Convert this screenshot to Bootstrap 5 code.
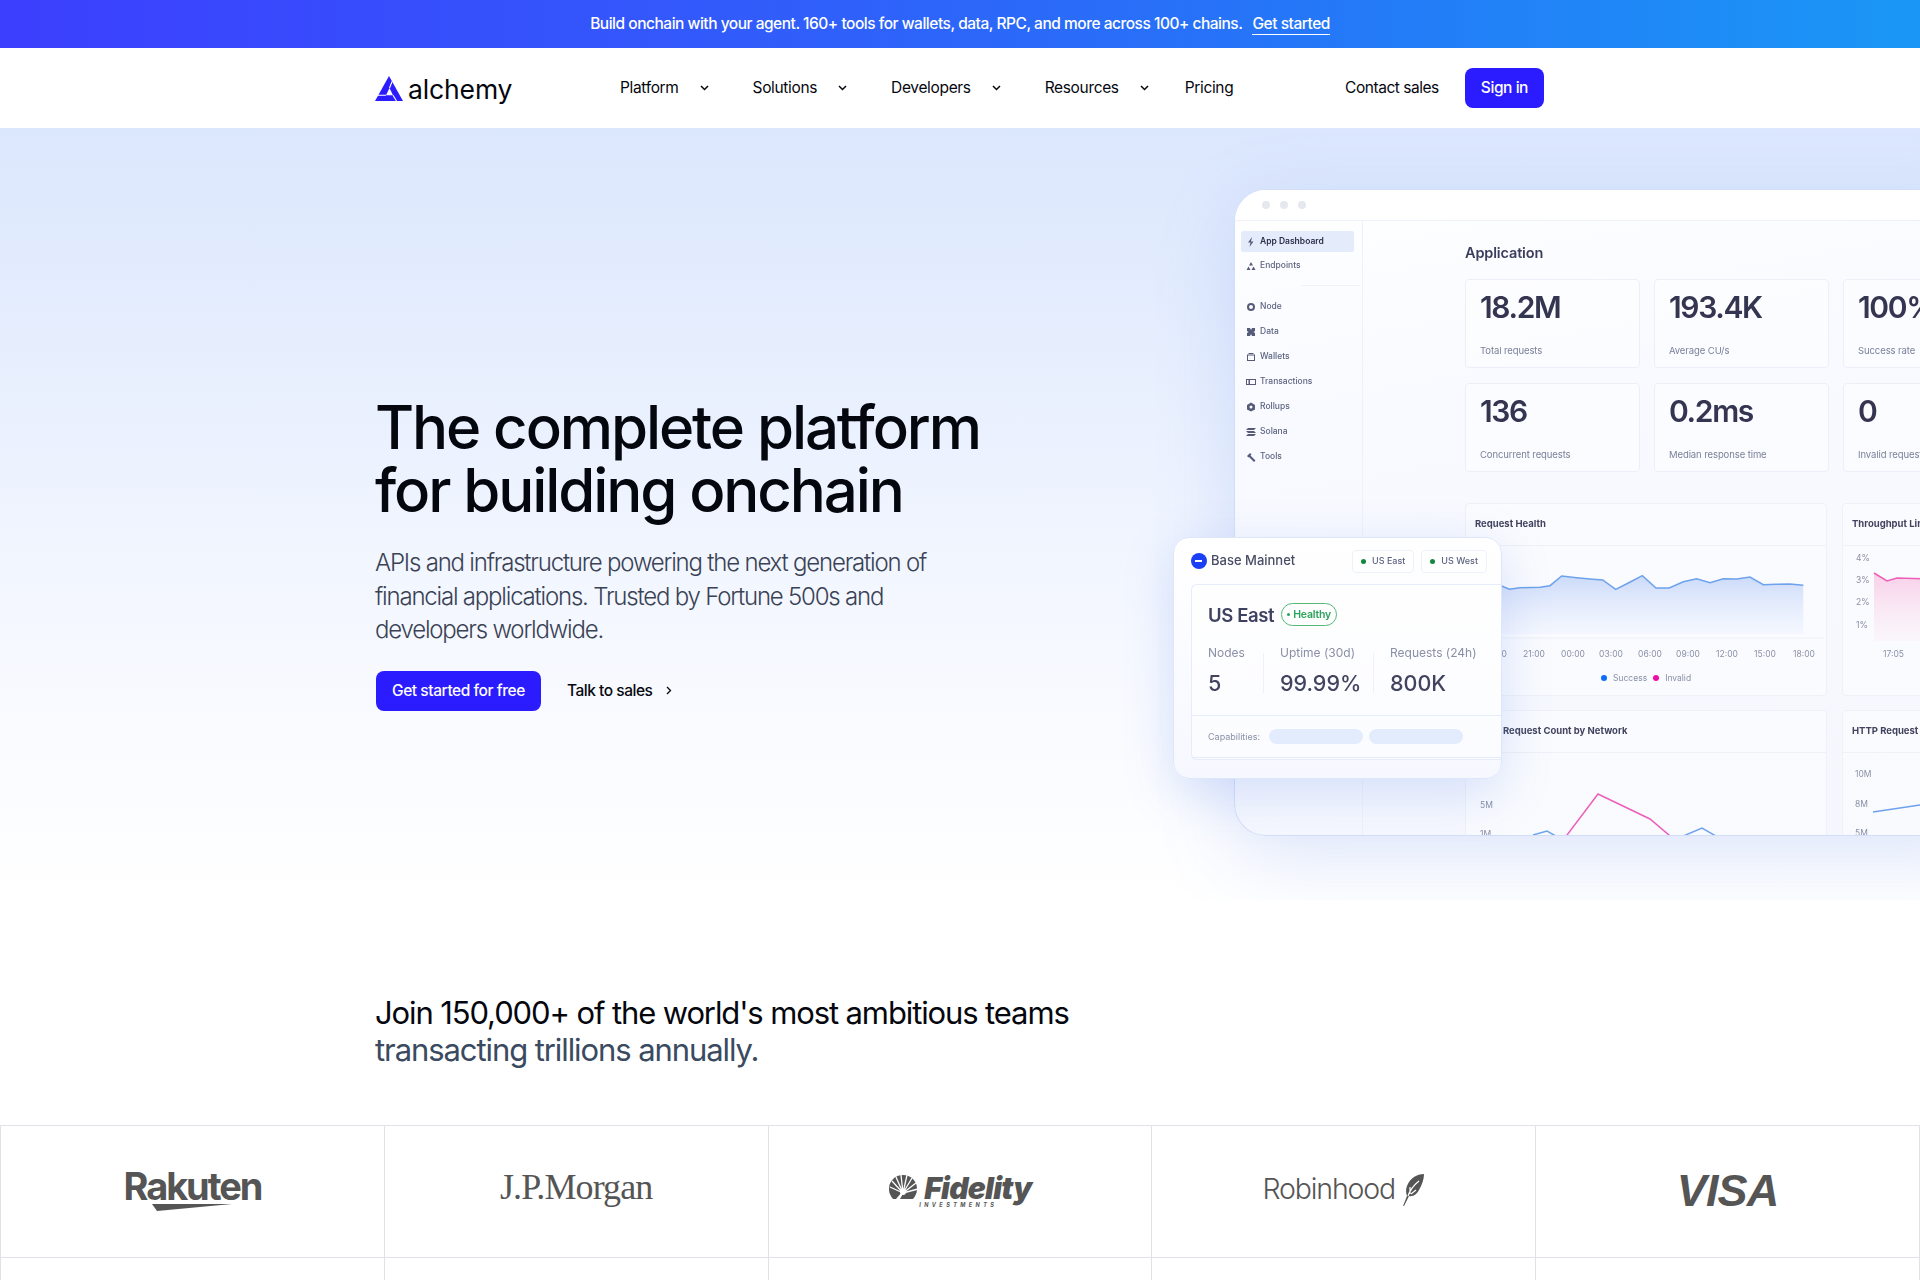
<!doctype html>
<html lang="en">
<head>
<meta charset="utf-8">
<title>Alchemy</title>
<link href="https://cdn.jsdelivr.net/npm/bootstrap@5.3.0/dist/css/bootstrap.min.css" rel="stylesheet">
<style>
html,body{height:1280px;overflow:hidden}
body{font-family:Inter,"Liberation Sans",sans-serif;color:#05070f;background:#fff}
.promo{height:48px;background:linear-gradient(90deg,#3c3ffe 0%,#3358fb 35%,#2674f8 65%,#1a97f6 100%);font-size:15.5px;font-weight:500;letter-spacing:-.031em;color:#fff}
.promo a{color:#fff;text-decoration:none;border-bottom:1px solid #fff;margin-left:10px;line-height:20px}
.topnav{height:80px;padding:0}
.topnav-in{width:1169px;margin-left:375px;height:80px}
.brandmark{width:245px;margin:0;padding:0;font-size:26.5px;line-height:1;font-weight:400;letter-spacing:-.005em;color:#05070f;gap:5px}
.brandmark span{position:relative;top:1px}
.topnav .navbar-nav{gap:44px}
.topnav .navbar-nav .nav-link{padding:0;color:#05070f;font-size:15.5px;font-weight:400;letter-spacing:-.022em;display:flex;align-items:center;gap:21px}
.topnav .navbar-nav .nav-link.tightlink{margin-left:-8px}
.contact{color:#05070f;font-size:15.5px;letter-spacing:-.03em;text-decoration:none;margin-right:26px}
.brandbtn{background:#2b1cff;border:0;color:#fff;height:40px;border-radius:8px;font-size:15.5px;font-weight:500;letter-spacing:-.028em;padding:0 16px;display:inline-flex;align-items:center}
.brandbtn:hover{background:#2b1cff;color:#fff}
.herobtn{margin-left:1px}
.hero{height:772px;background:linear-gradient(180deg,#dbe7fd 0%,#e9f0fe 35%,#f5f8ff 65%,#fff 100%);overflow:hidden}
.herotext{width:1234px;flex:none;padding:268px 0 0 375px}
.herotitle{font-size:60px;line-height:63px;font-weight:500;letter-spacing:-.035em;color:#05070f;margin:0 0 24px;white-space:nowrap}
.herolead{font-size:24px;line-height:33.6px;font-weight:300;letter-spacing:-.05em;color:#3a4254;margin:0 0 24px;width:570px}
.talk{color:#05070f;font-size:15.5px;font-weight:500;letter-spacing:-.03em;text-decoration:none;margin-left:26px;gap:14px}
.dashwrap{position:relative;flex:none;margin-top:61px;width:760px;height:647px}
.dash{width:760px;height:647px;border-radius:32px 0 0 32px;background:linear-gradient(170deg,#fff 0%,#f8faff 30%,#f5f7fe 100%);border:1px solid #d3dff8;border-right:0;box-shadow:0 20px 80px rgba(90,130,230,.2);overflow:hidden;display:grid;grid-template-columns:128px 1fr;grid-template-rows:31px 1fr;filter:blur(.55px);color:#343550}
.dashtop{grid-column:1/3;background:#fff;border-bottom:1px solid #eef1f8;padding-left:27px;gap:10px}
.dashtop i{display:block;width:8px;height:8px;border-radius:50%;background:#e6e8ef}
.dashside{border-right:1px solid #eef1f8;padding:10px 8px 0 6px;font-size:8.5px;font-weight:500;color:#5d6480}
.sideitem{height:25px;display:flex;align-items:center;gap:4px;padding-left:5px}
.sideitem svg{flex:none;width:10px;height:10px;fill:#555b78}
.sideitem.sel{height:21px;background:#e4ecfc;color:#2c2e4a;font-weight:600;border-radius:2px;margin-bottom:1px}
.sideitem.tip{margin-bottom:7px}
.sidebreak{height:1px;background:#eef1f8;margin:0 -6px 8px 60px}
.dashmain{padding:23px 0 0 102px}
.apptitle{font-size:14.5px;font-weight:600;line-height:18px;letter-spacing:-.01em;margin-bottom:17px;color:#3b3d5c}
.statgrid{display:grid;grid-template-columns:175px 175px 175px;gap:15px 14px;margin-bottom:31px}
.statbox{height:89px;border:1px solid #eceff8;border-radius:4px;padding:10px 0 0 14px;background:rgba(255,255,255,.45)}
.statval{font-size:30px;font-weight:600;line-height:34px;letter-spacing:-.045em;color:#343550}
.statcap{font-size:9.5px;color:#7a8199;margin-top:21px;line-height:12px;letter-spacing:-.01em}
.chartgrid{display:grid;grid-template-columns:362px 362px;gap:14px 15px}
.chartbox{border:1px solid #eef1f8;border-radius:4px;height:193px;background:rgba(255,255,255,.4)}
.charthead{height:42px;border-bottom:1px solid #eef1f8;padding:0 0 0 9px;display:flex;align-items:center;font-size:9.5px;font-weight:700;color:#42445f}
.charthead.pushed{padding-left:37px}
.chartbox svg{display:block}
.axis{font-family:Inter,"Liberation Sans",sans-serif;font-size:8.5px;fill:#8a90a6}
.legend{font-size:8.5px;color:#8a90a6;gap:6px;margin-left:135px;margin-top:4px}
.legend i{display:block;width:6px;height:6px;border-radius:50%}
.floatcard{position:absolute;left:-61px;top:348px;width:329px;height:242px;border-radius:16px;background:linear-gradient(180deg,#fff,#f6f8ff);border:1px solid #dde6fa;box-shadow:0 14px 50px rgba(90,130,230,.22);filter:blur(.45px);color:#3a3c58;overflow:hidden}
.floathead{height:46px;padding:0 14px 0 17px}
.basecoin{width:16px;height:16px;border-radius:50%;background:#1b3ff5;position:relative;flex:none}
.basecoin::after{content:"";position:absolute;left:4px;right:5px;top:7px;height:1.5px;background:#fff}
.basename{font-size:13px;font-weight:500;color:#4a4c66;margin-left:4px}
.regionpill{height:23px;border:1px solid #eef1f8;border-radius:4px;background:#fff;font-size:9px;font-weight:500;color:#5d6480;padding:0 8px;gap:6px;margin-left:7px}
.regionpill i{display:block;width:5px;height:5px;border-radius:50%;background:#11883c}
.floatbody{margin-left:17px;border:1px solid #e6ecfa;border-right:0;border-radius:6px 0 0 6px;height:176px;background:rgba(255,255,255,.5)}
.regionline{padding:18px 0 0 16px;height:50px;gap:7px}
.regionname{font-size:18.5px;line-height:24px;font-weight:600;letter-spacing:-.02em;color:#3f4160}
.healthy{height:23px;border:1.5px solid #55b878;border-radius:12px;color:#2aa35b;font-size:10.5px;font-weight:600;letter-spacing:-.02em;padding:0 5px;gap:3px}
.healthy i{display:block;width:3px;height:3px;border-radius:50%;background:#2aa35b}
.regionstats{padding:10px 0 0 16px;height:81px;border-bottom:1px solid #e6ecfa}
.regionstat{height:50px}
.regionstat div:first-child{font-size:12px;line-height:16px;color:#8a90a6}
.regionstat div:last-child{font-size:21.5px;line-height:26px;font-weight:500;margin-top:9px;color:#41435f}
.cellA{width:72px}
.cellB{width:110px}
.statrule{width:1px;height:40px;background:#eef1f8;margin:8px 0 0 -17px}
.capsrow{height:42px;padding-left:16px;font-size:9px;color:#8a90a6;border-bottom:1px solid #e6ecfa}
.capsrow i{display:block;width:94px;height:15px;border-radius:8px;background:#e2ecfc;margin-left:6px}
.capsrow i:first-of-type{margin-left:9px}
.joinsec{height:225px;padding:94px 0 0 375px}
.jointitle{font-size:31px;line-height:37px;font-weight:400;letter-spacing:-.036em;margin:0;color:#05070f}
.jointitle span{display:block;color:#3a4a60;letter-spacing:-.035em}
.logogrid{border-top:1px solid #dfe3e8;border-left:1px solid #dfe3e8;--bs-gutter-x:0;margin:0}
.logocell{height:132px;border-right:1px solid #dfe3e8;border-bottom:1px solid #dfe3e8;color:#555;display:flex;align-items:center;justify-content:center}
.logocell.tail{height:23px;border-bottom:0}
.lg-rakuten{font-family:Inter,sans-serif;font-weight:700;font-size:38px;line-height:32px;letter-spacing:-.055em;text-align:center;margin-top:-3px}
.lg-rakuten svg{display:block;margin:1px auto 0}
.lg-jpm{font-family:"Liberation Serif",serif;font-size:36px;letter-spacing:-.025em;margin-top:-10px}
.lg-fid-name{font-family:Inter,sans-serif;font-style:italic;font-weight:900;font-size:30px;line-height:27px;letter-spacing:-.025em;margin-left:3px}
.lg-fid-sub{font-size:5.5px;font-weight:700;font-style:italic;letter-spacing:.62em;line-height:6px;margin-left:-2px;white-space:nowrap}
.lg-rob{font-family:Inter,sans-serif;font-weight:300;font-size:28.5px;letter-spacing:-.04em;gap:7px;margin-top:-5px}
.lg-visa{font-family:"Liberation Sans",sans-serif;font-style:italic;font-weight:700;font-size:45px;letter-spacing:-.02em;line-height:32px;margin-top:-2px}
</style>
</head>
<body>
<div class="promo d-flex align-items-center justify-content-center">
  <span>Build onchain with your agent. 160+ tools for wallets, data, RPC, and more across 100+ chains.</span><a href="#">Get started</a>
</div>

<nav class="navbar navbar-expand bg-white topnav">
  <div class="topnav-in d-flex align-items-center">
    <a class="navbar-brand d-flex align-items-center brandmark" href="#">
      <svg width="28" height="25" viewBox="0 0 28 25" aria-hidden="true"><path fill="#2b1cff" d="M14 0 28 25H0Z"/><path fill="#fff" d="M14.500 12 18 19.300H11Z"/><path fill="none" stroke="#fff" stroke-width="1.100" d="M3 19.300H11M14.500 12 17.100 5.500M18 19.300 21.500 25"/></svg>
      <span>alchemy</span>
    </a>
    <ul class="navbar-nav">
      <li class="nav-item"><a class="nav-link" href="#">Platform <svg width="9" height="6" viewBox="0 0 9 6"><path d="M1 1l3.500 3.500L8 1" fill="none" stroke="#05070f" stroke-width="1.500"/></svg></a></li>
      <li class="nav-item"><a class="nav-link" href="#">Solutions <svg width="9" height="6" viewBox="0 0 9 6"><path d="M1 1l3.500 3.500L8 1" fill="none" stroke="#05070f" stroke-width="1.500"/></svg></a></li>
      <li class="nav-item"><a class="nav-link" href="#">Developers <svg width="9" height="6" viewBox="0 0 9 6"><path d="M1 1l3.500 3.500L8 1" fill="none" stroke="#05070f" stroke-width="1.500"/></svg></a></li>
      <li class="nav-item"><a class="nav-link" href="#">Resources <svg width="9" height="6" viewBox="0 0 9 6"><path d="M1 1l3.500 3.500L8 1" fill="none" stroke="#05070f" stroke-width="1.500"/></svg></a></li>
      <li class="nav-item"><a class="nav-link tightlink" href="#">Pricing</a></li>
    </ul>
    <div class="ms-auto d-flex align-items-center">
      <a class="contact" href="#">Contact sales</a>
      <a class="btn brandbtn" href="#">Sign in</a>
    </div>
  </div>
</nav>

<section class="hero d-flex align-items-start">
  <div class="herotext">
    <h1 class="herotitle">The complete platform<br>for building onchain</h1>
    <p class="herolead">APIs and infrastructure powering the next generation of financial applications. Trusted by Fortune 500s and developers worldwide.</p>
    <div class="d-flex align-items-center">
      <a class="btn brandbtn herobtn" href="#">Get started for free</a>
      <a class="talk d-inline-flex align-items-center" href="#">Talk to sales <svg width="6" height="9" viewBox="0 0 6 9"><path d="M1 1l3.500 3.500L1 8" fill="none" stroke="#05070f" stroke-width="1.300"/></svg></a>
    </div>
  </div>

  <div class="dashwrap">
    <div class="dash">
      <div class="dashtop d-flex align-items-center"><i></i><i></i><i></i></div>
      <aside class="dashside">
        <div class="sideitem sel"><svg viewBox="0 0 10 10"><path d="M6 0 2 5.500h2.500L3.500 10l4-5.500H5Z"/></svg>App Dashboard</div>
        <div class="sideitem tip"><svg viewBox="0 0 10 10"><path d="M5 1 7 4.500H3ZM2.500 5.500 4.500 9H.5ZM7.500 5.500 9.500 9H5.500Z"/></svg>Endpoints</div>
        <div class="sidebreak"></div>
        <div class="sideitem"><svg viewBox="0 0 10 10"><path d="M5 1a4 4 0 1 0 0 8 4 4 0 0 0 0-8Zm0 2a2 2 0 1 1 0 4 2 2 0 0 1 0-4Z"/></svg>Node</div>
        <div class="sideitem"><svg viewBox="0 0 10 10"><path d="M1 1h3l1 2 1-2h3v3L7.500 5 9 6v3H6L5 7 4 9H1V6l1.500-1L1 4Z"/></svg>Data</div>
        <div class="sideitem"><svg viewBox="0 0 10 10"><path fill-rule="evenodd" d="M1 2.500h8V9H1ZM2 3.500V8h6V3.500ZM2.500 1h5v1h-5Z"/></svg>Wallets</div>
        <div class="sideitem"><svg viewBox="0 0 10 10"><path fill-rule="evenodd" d="M0 2h10v6H0ZM1 3v4h1.500V3ZM4 3v4h5V3Z"/></svg>Transactions</div>
        <div class="sideitem"><svg viewBox="0 0 10 10"><path fill-rule="evenodd" d="M5 .5 9 3v4.500L5 9.500 1 7.500V3ZM5 3.500a1.500 1.500 0 1 0 0 3 1.500 1.500 0 0 0 0-3Z"/></svg>Rollups</div>
        <div class="sideitem"><svg viewBox="0 0 10 10"><path d="M2 1h8L8 3H0ZM0 4h8l2 2H2ZM2 7h8L8 9H0Z"/></svg>Solana</div>
        <div class="sideitem"><svg viewBox="0 0 10 10"><path d="M1 4 4 1l1.500 1.500-1 1L9.500 8.500 8 10 3 5 2.500 5.500Z"/></svg>Tools</div>
      </aside>
      <main class="dashmain">
        <div class="apptitle">Application</div>
        <div class="statgrid">
          <div class="statbox"><div class="statval">18.2M</div><div class="statcap">Total requests</div></div>
          <div class="statbox"><div class="statval">193.4K</div><div class="statcap">Average CU/s</div></div>
          <div class="statbox"><div class="statval">100%</div><div class="statcap">Success rate</div></div>
          <div class="statbox"><div class="statval">136</div><div class="statcap">Concurrent requests</div></div>
          <div class="statbox"><div class="statval">0.2ms</div><div class="statcap">Median response time</div></div>
          <div class="statbox"><div class="statval">0</div><div class="statcap">Invalid requests</div></div>
        </div>
        <div class="chartgrid">
          <div class="chartbox">
            <div class="charthead">Request Health</div>
            <svg width="360" height="122" viewBox="0 0 360 122">
              <defs>
                <linearGradient id="fillblue" x1="0" y1="0" x2="0" y2="1"><stop offset="0" stop-color="#cbdaf9"/><stop offset="1" stop-color="#eef3fe" stop-opacity=".5"/></linearGradient>
                <linearGradient id="fillpink" x1="0" y1="0" x2="0" y2="1"><stop offset="0" stop-color="#f8cfe8"/><stop offset="1" stop-color="#fbeaf5" stop-opacity=".3"/></linearGradient>
              </defs>
              <path fill="url(#fillblue)" d="M10 40 35.700 40 43.300 43.300 54 41.700 74 41.300 84 39.700 95.700 30 110.700 31.700 124 33 136.700 34 149.700 43.300 162.300 37 176.300 29.700 190 42 203.300 42 217.300 35.700 230.700 32.700 244 36.700 257.300 32.700 270.700 33 284 31 297.300 38.700 310.700 38.300 324 38 337.300 39.300V88H10Z"/>
              <polyline fill="none" stroke="#6ea2ec" stroke-width="1.500" points="10,40 35.700,40 43.300,43.300 54,41.700 74,41.300 84,39.700 95.700,30 110.700,31.700 124,33 136.700,34 149.700,43.300 162.300,37 176.300,29.700 190,42 203.300,42 217.300,35.700 230.700,32.700 244,36.700 257.300,32.700 270.700,33 284,31 297.300,38.700 310.700,38.300 324,38 337.300,39.300"/>
              <line x1="20" y1="92" x2="358" y2="92" stroke="#eef1f8"/>
              <g class="axis" text-anchor="middle">
                <text x="30" y="111">18:00</text><text x="68" y="111">21:00</text><text x="107" y="111">00:00</text><text x="145" y="111">03:00</text><text x="184" y="111">06:00</text><text x="222" y="111">09:00</text><text x="261" y="111">12:00</text><text x="299" y="111">15:00</text><text x="338" y="111">18:00</text>
              </g>
            </svg>
            <div class="legend d-flex align-items-center"><i style="background:#0d6dfa"></i>Success<i style="background:#ee0ea5"></i>Invalid</div>
          </div>
          <div class="chartbox">
            <div class="charthead">Throughput Limit</div>
            <svg width="360" height="122" viewBox="0 0 360 122">
              <path fill="url(#fillpink)" d="M31 27 44 35 54 32 90 33V95H31Z"/>
              <polyline fill="none" stroke="#ee5fb8" stroke-width="1.500" points="31,27 44,35 54,32 90,33"/>
              <g class="axis"><text x="13" y="15">4%</text><text x="13" y="37">3%</text><text x="13" y="59">2%</text><text x="13" y="82">1%</text><text x="40" y="111">17:05</text></g>
            </svg>
          </div>
          <div class="chartbox">
            <div class="charthead pushed">Request Count by Network</div>
            <svg width="360" height="122" viewBox="0 0 360 122">
              <polyline fill="none" stroke="#ec5fbb" stroke-width="1.500" points="95,90 132,41 184,66 210,88"/>
              <polyline fill="none" stroke="#6ea2ec" stroke-width="1.500" points="67,82 81,78 95,86"/>
              <polyline fill="none" stroke="#6ea2ec" stroke-width="1.500" points="215,84 236,75 255,86"/>
              <g class="axis"><text x="14" y="55">5M</text><text x="14" y="84">1M</text></g>
            </svg>
          </div>
          <div class="chartbox">
            <div class="charthead">HTTP Request Count</div>
            <svg width="360" height="122" viewBox="0 0 360 122">
              <polyline fill="none" stroke="#6ea2ec" stroke-width="1.500" points="30,59 77,52 120,48"/>
              <g class="axis"><text x="12" y="24">10M</text><text x="12" y="54">8M</text><text x="12" y="83">5M</text></g>
            </svg>
          </div>
        </div>
      </main>
    </div>

    <div class="floatcard">
      <div class="floathead d-flex align-items-center">
        <span class="basecoin"></span><span class="basename">Base Mainnet</span>
        <span class="regionpill d-flex align-items-center ms-auto"><i></i>US East</span>
        <span class="regionpill d-flex align-items-center"><i></i>US West</span>
      </div>
      <div class="floatbody">
        <div class="regionline d-flex align-items-start">
          <span class="regionname">US East</span>
          <span class="healthy d-inline-flex align-items-center"><i></i>Healthy</span>
        </div>
        <div class="regionstats d-flex">
          <div class="regionstat cellA"><div>Nodes</div><div>5</div></div>
          <span class="statrule"></span>
          <div class="regionstat cellB ms-3"><div>Uptime (30d)</div><div>99.99%</div></div>
          <span class="statrule"></span>
          <div class="regionstat ms-3"><div>Requests (24h)</div><div>800K</div></div>
        </div>
        <div class="capsrow d-flex align-items-center">Capabilities:<i></i><i></i></div>
      </div>
    </div>
  </div>
</section>

<section class="joinsec">
  <h2 class="jointitle">Join 150,000+ of the world's most ambitious teams<span>transacting trillions annually.</span></h2>
</section>

<div class="row row-cols-5 logogrid">
  <div class="col logocell"><div class="lg-rakuten">Rakuten<svg width="80" height="8" viewBox="0 0 80 8"><path fill="#555" d="M0 1H80L5 8Z"/></svg></div></div>
  <div class="col logocell"><div class="lg-jpm">J.P.Morgan</div></div>
  <div class="col logocell">
    <div class="d-flex align-items-start">
      <svg width="33" height="30" viewBox="0 0 33 30"><circle cx="15" cy="14" r="14" fill="#555"/><path stroke="#fff" stroke-width="1.300" d="M15 18 2 12M15 18 4 6M15 18 8 2M15 18 13 0M15 18 19 0M15 18 24 3M15 18 28 8M15 18 30 14"/><circle cx="15" cy="17" r="3" fill="#fff"/><path fill="#fff" d="M0 24H8L14 17 16 17 12 24H30V30H0Z"/></svg>
      <div><div class="lg-fid-name">Fidelity</div><div class="lg-fid-sub">INVESTMENTS</div></div>
    </div>
  </div>
  <div class="col logocell">
    <div class="lg-rob d-flex align-items-center">Robinhood
      <svg width="23" height="33" viewBox="0 0 23 33"><path fill="#555" d="M22 1C15 1 8 5 5 13 3.500 17 4 20 5 23L1 33H2L7 23C11 24 15 21 17 17 20 12 22 6 22 1Z"/><path fill="none" stroke="#fff" stroke-width="1.200" d="M17 8C12 12 8 17 6 23M8 14C8 17 8 19 8 21M14 17 9 21"/></svg>
    </div>
  </div>
  <div class="col logocell"><div class="lg-visa">VISA</div></div>
  <div class="col logocell tail"></div>
  <div class="col logocell tail"></div>
  <div class="col logocell tail"></div>
  <div class="col logocell tail"></div>
  <div class="col logocell tail"></div>
</div>
<script src="https://cdn.jsdelivr.net/npm/bootstrap@5.3.0/dist/js/bootstrap.bundle.min.js"></script>
</body>
</html>
